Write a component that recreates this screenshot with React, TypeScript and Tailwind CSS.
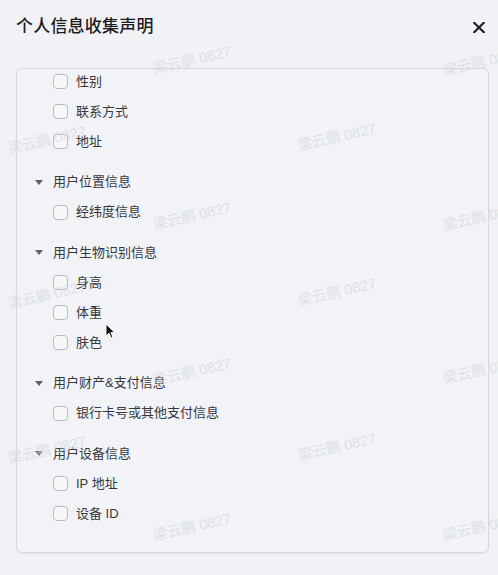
import React from "react";

type Group = { title?: string; items: string[] };

const groups: Group[] = [
  { items: ["性别", "联系方式", "地址"] },
  { title: "用户位置信息", items: ["经纬度信息"] },
  { title: "用户生物识别信息", items: ["身高", "体重", "肤色"] },
  { title: "用户财产&支付信息", items: ["银行卡号或其他支付信息"] },
  { title: "用户设备信息", items: ["IP 地址", "设备 ID"] },
];

const marks: [number, number][] = [
  [190, 60],
  [480, 62],
  [45, 140],
  [335, 137],
  [190, 216],
  [480, 217],
  [45, 295],
  [335, 292],
  [190, 372],
  [480, 370],
  [45, 450],
  [335, 447],
  [190, 527],
  [480, 527],
];

function Checkbox() {
  return (
    <span className="box-border block w-[15px] h-[15px] shrink-0 rounded-[4px] border border-[#b9bbbf] bg-[#f6f7f9]" />
  );
}

function Caret() {
  return (
    <svg width="8" height="5" viewBox="0 0 8 5" className="shrink-0">
      <polygon points="0,0 8,0 4,5" fill="#5f6166" />
    </svg>
  );
}

export default function App() {
  return (
    <div
      className="relative w-[498px] h-[575px] overflow-hidden bg-[#f0f2f5]"
      style={{ fontFamily: '"Liberation Sans", "Noto Sans CJK SC", sans-serif' }}
    >
      <div className="flex h-[54px] items-center justify-between pl-[16px] pr-[13px]">
        <span className="text-[17px] font-medium text-[#1d1d1f] tracking-[0.2px]">个人信息收集声明</span>
        <svg width="12" height="11" viewBox="0 0 12 11">
          <path d="M1.2 0.8 L10.8 10.2 M10.8 0.8 L1.2 10.2" stroke="#1a1a1a" strokeWidth="2.1" strokeLinecap="round" />
        </svg>
      </div>

      <div className="mt-[14px] ml-[16px] mr-[9px] h-[485px] overflow-hidden rounded-[6px] border border-[#d5d7db] bg-[#f1f3f6] shadow-[0_1px_2px_rgba(0,0,0,0.06)]">
        <div className="-mt-[2.5px] flex flex-col gap-[10.5px] pl-[18px]">
          {groups.map((g, gi) => (
            <div key={gi} className="flex flex-col">
              {g.title && (
                <div className="flex h-[30px] items-center gap-[10px]">
                  <Caret />
                  <span className="text-[13px] text-[#38393c]">{g.title}</span>
                </div>
              )}
              {g.items.map((it) => (
                <div key={it} className="flex h-[30px] items-center gap-[8px] pl-[18px]">
                  <Checkbox />
                  <span className="text-[13px] text-[#38393c]">{it}</span>
                </div>
              ))}
            </div>
          ))}
        </div>
      </div>

      {marks.map(([x, y], i) => (
        <span
          key={i}
          className="pointer-events-none absolute whitespace-nowrap text-[14.5px] leading-[18px] text-[#d6d9df] opacity-70 rotate-[-13deg]"
          style={{ left: x - 38, top: y - 9 }}
        >
          梁云鹏 0827
        </span>
      ))}

      <svg
        width="11"
        height="16"
        viewBox="0 0 11 16"
        className="pointer-events-none absolute left-[105px] top-[323px]"
      >
        <path
          d="M1 1 L1 13 L4 10.2 L6.2 15 L8 14.2 L5.8 9.5 L9.6 9.5 Z"
          fill="#111"
          stroke="#fff"
          strokeWidth="0.9"
          strokeLinejoin="round"
        />
      </svg>
    </div>
  );
}
